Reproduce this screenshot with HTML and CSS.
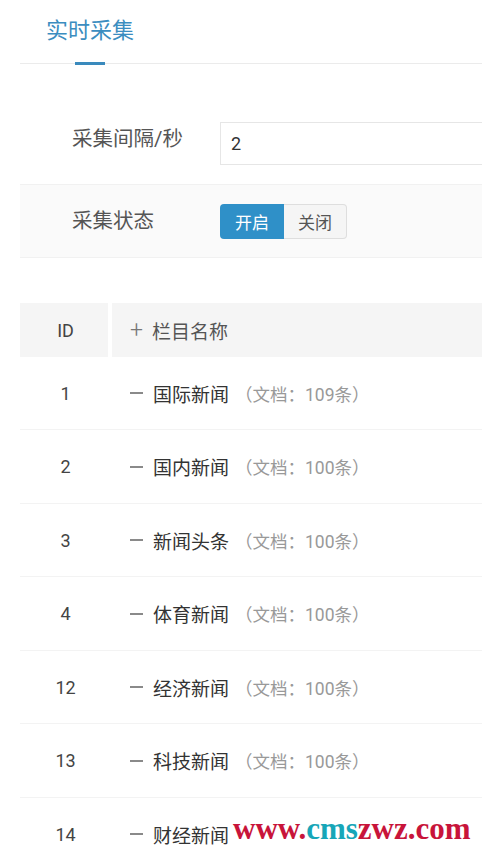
FILE: index.html
```html
<!DOCTYPE html>
<html lang="zh-CN">
<head>
<meta charset="utf-8">
<title>实时采集</title>
<link rel="stylesheet" href="styles.css">
</head>
<body>
<div class="page">
  <div class="tabs">
    <div class="tab active">实时采集</div>
  </div>

  <div class="form">
    <div class="form-row first">
      <label class="label">采集间隔/秒</label>
      <input class="input" type="text" value="2">
    </div>
    <div class="form-row alt">
      <label class="label">采集状态</label>
      <div class="switch">
        <span class="sw-btn on">开启</span>
        <span class="sw-btn off">关闭</span>
      </div>
    </div>
  </div>

  <div class="table">
    <div class="trow thead">
      <div class="cell id">ID</div>
      <div class="cell name"><span class="plus">+</span>栏目名称</div>
    </div>
    <div class="trow">
      <div class="cell id">1</div>
      <div class="cell name"><span class="dash"></span><span class="title">国际新闻</span><span class="count">（文档：109条）</span></div>
    </div>
    <div class="trow">
      <div class="cell id">2</div>
      <div class="cell name"><span class="dash"></span><span class="title">国内新闻</span><span class="count">（文档：100条）</span></div>
    </div>
    <div class="trow">
      <div class="cell id">3</div>
      <div class="cell name"><span class="dash"></span><span class="title">新闻头条</span><span class="count">（文档：100条）</span></div>
    </div>
    <div class="trow">
      <div class="cell id">4</div>
      <div class="cell name"><span class="dash"></span><span class="title">体育新闻</span><span class="count">（文档：100条）</span></div>
    </div>
    <div class="trow">
      <div class="cell id">12</div>
      <div class="cell name"><span class="dash"></span><span class="title">经济新闻</span><span class="count">（文档：100条）</span></div>
    </div>
    <div class="trow">
      <div class="cell id">13</div>
      <div class="cell name"><span class="dash"></span><span class="title">科技新闻</span><span class="count">（文档：100条）</span></div>
    </div>
    <div class="trow">
      <div class="cell id">14</div>
      <div class="cell name"><span class="dash"></span><span class="title">财经新闻</span><span class="count">（文档：100条）</span></div>
    </div>
  </div>
</div>
<div class="watermark"><span class="wm-red">www.</span><span class="wm-teal">cms</span><span class="wm-red">zwz.com</span></div>
</body>
</html>
```

FILE: styles.css
```css
html, body {
  margin: 0;
  padding: 0;
  background: #fff;
  overflow: hidden;
  height: 850px;
}

body {
  font-family: Roboto, "Noto Sans CJK SC", sans-serif;
  color: #333;
  position: relative;
}

.page {
  margin-left: 20px;
  width: 640px;
}

/* tabs */
.tabs {
  display: flex;
  border-bottom: 1px solid #ebebeb;
}

.tab {
  position: relative;
  padding: 17px 26px 0;
  height: 46px;
  font-size: 22px;
  line-height: 27px;
  color: #3b8dc0;
}

.tab.active::after {
  content: "";
  position: absolute;
  left: 55px;
  bottom: -2px;
  width: 30px;
  height: 3px;
  background: #3a8abd;
}

/* form */
.form {
  margin-top: 46px;
}

.form-row {
  display: flex;
  align-items: center;
  height: 74px;
  box-sizing: border-box;
}

.form-row.first {
  align-items: flex-start;
  padding-top: 12px;
}

.form-row.alt {
  background: #fafafa;
  border-top: 1px solid #f1f1f1;
  border-bottom: 1px solid #f1f1f1;
}

.label {
  width: 148px;
  padding-left: 52px;
  font-size: 20.5px;
  line-height: 34px;
  color: #555;
}

.input {
  box-sizing: border-box;
  width: 400px;
  height: 43px;
  border: 1px solid #e6e6e6;
  border-right: none;
  padding: 0 10px;
  font-family: Roboto, "Noto Sans CJK SC", sans-serif;
  font-size: 18px;
  color: #333;
  background: #fff;
  outline: none;
}

.switch {
  display: flex;
  height: 35px;
}

.sw-btn {
  display: flex;
  align-items: center;
  justify-content: center;
  box-sizing: border-box;
  height: 35px;
  font-size: 17px;
}

.sw-btn.on {
  width: 64px;
  background: #2f90c8;
  color: #fff;
  border-radius: 4px 0 0 4px;
}

.sw-btn.off {
  width: 63px;
  background: #f5f5f5;
  color: #555;
  border: 1px solid #dedede;
  border-left: none;
  border-radius: 0 4px 4px 0;
}

/* table */
.table {
  margin-top: 45px;
}

.trow {
  display: grid;
  grid-template-columns: 88px 1fr;
  column-gap: 4px;
  height: 73px;
  box-sizing: border-box;
  border-bottom: 1px solid #f3f3f3;
}

.trow:nth-child(odd) {
  height: 74px;
}

.trow.thead {
  height: 54px;
  border-bottom: none;
}

.thead .cell {
  background: #f5f5f5;
  color: #555;
}

.cell {
  display: flex;
  align-items: center;
  font-size: 18px;
}

.cell.id {
  justify-content: center;
  color: #444;
  padding-left: 3px;
}

.thead .cell.name {
  font-size: 19px;
}

.cell.name {
  padding-left: 18px;
}

.plus {
  font-size: 23px;
  font-weight: 300;
  color: #777;
  margin-right: 9px;
  line-height: 1;
}

.dash {
  display: inline-block;
  width: 13px;
  height: 2px;
  background: #8a8a8a;
  margin-right: 10px;
}

.title {
  font-size: 19px;
  color: #333;
}

.count {
  font-size: 17.5px;
  color: #999;
  margin-left: 6px;
}

/* watermark overlay */
.watermark {
  position: absolute;
  left: 231px;
  top: 812px;
  padding: 0 4px 0 2px;
  background: #fff;
  font-family: "Liberation Serif", serif;
  font-weight: bold;
  font-size: 31px;
  line-height: 34px;
}

.wm-red {
  color: #c8143a;
}

.wm-teal {
  color: #17a6b8;
}
```
